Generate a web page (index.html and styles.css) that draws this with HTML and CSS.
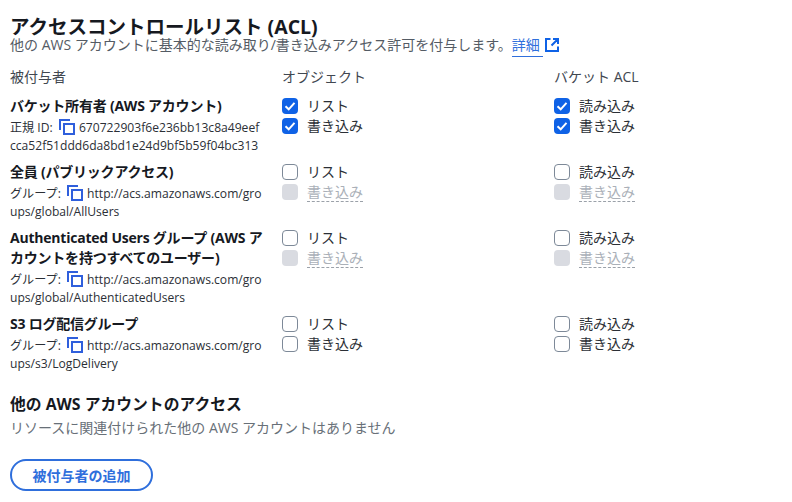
FILE: index.html
```html
<!DOCTYPE html>
<html lang="ja">
<head>
    <meta charset="UTF-8">
    <title>アクセスコントロールリスト (ACL)</title>
    <link rel="stylesheet" href="styles.css">
</head>
<body>
    <div class="container">
        <h1>アクセスコントロールリスト (ACL)</h1>
        <p class="desc">他の AWS アカウントに基本的な読み取り/書き込みアクセス許可を付与します。<a class="more" href="#">詳細</a><svg class="ext-icon" width="14" height="14" viewBox="0 0 14 14"><path d="M5.500 1H1v12h12V8.500M8 1H13V6M13 1L6.500 7.500" fill="none" stroke="#0f62e6" stroke-width="2"/></svg></p>

        <div class="acl-grid">
            <div class="col-head">被付与者</div>
            <div class="col-head">オブジェクト</div>
            <div class="col-head">バケット ACL</div>

            <div class="grantee">
                <div class="grantee-name">バケット所有者 (AWS アカウント)</div>
                <div class="grantee-id">正規 ID: <svg class="copy-icon" width="16" height="16" viewBox="0 0 16 16"><use href="#copy"/></svg> 670722903f6e236bb13c8a49eefcca52f51ddd6da8bd1e24d9bf5b59f04bc313</div>
            </div>
            <div class="checks">
                <div class="check"><span class="box checked"><svg width="16" height="16" viewBox="0 0 16 16"><use href="#tick"/></svg></span>リスト</div>
                <div class="check"><span class="box checked"><svg width="16" height="16" viewBox="0 0 16 16"><use href="#tick"/></svg></span>書き込み</div>
            </div>
            <div class="checks">
                <div class="check"><span class="box checked"><svg width="16" height="16" viewBox="0 0 16 16"><use href="#tick"/></svg></span>読み込み</div>
                <div class="check"><span class="box checked"><svg width="16" height="16" viewBox="0 0 16 16"><use href="#tick"/></svg></span>書き込み</div>
            </div>

            <div class="grantee">
                <div class="grantee-name">全員 (パブリックアクセス)</div>
                <div class="grantee-id">グループ: <svg class="copy-icon" width="16" height="16" viewBox="0 0 16 16"><use href="#copy"/></svg> http://acs.amazonaws.com/groups/global/AllUsers</div>
            </div>
            <div class="checks">
                <div class="check"><span class="box"></span>リスト</div>
                <div class="check disabled"><span class="box"></span><span class="dashed">書き込み</span></div>
            </div>
            <div class="checks">
                <div class="check"><span class="box"></span>読み込み</div>
                <div class="check disabled"><span class="box"></span><span class="dashed">書き込み</span></div>
            </div>

            <div class="grantee">
                <div class="grantee-name">Authenticated Users グループ (AWS アカウントを持つすべてのユーザー)</div>
                <div class="grantee-id">グループ: <svg class="copy-icon" width="16" height="16" viewBox="0 0 16 16"><use href="#copy"/></svg> http://acs.amazonaws.com/groups/global/AuthenticatedUsers</div>
            </div>
            <div class="checks">
                <div class="check"><span class="box"></span>リスト</div>
                <div class="check disabled"><span class="box"></span><span class="dashed">書き込み</span></div>
            </div>
            <div class="checks">
                <div class="check"><span class="box"></span>読み込み</div>
                <div class="check disabled"><span class="box"></span><span class="dashed">書き込み</span></div>
            </div>

            <div class="grantee">
                <div class="grantee-name">S3 ログ配信グループ</div>
                <div class="grantee-id">グループ: <svg class="copy-icon" width="16" height="16" viewBox="0 0 16 16"><use href="#copy"/></svg> http://acs.amazonaws.com/groups/s3/LogDelivery</div>
            </div>
            <div class="checks">
                <div class="check"><span class="box"></span>リスト</div>
                <div class="check"><span class="box"></span>書き込み</div>
            </div>
            <div class="checks">
                <div class="check"><span class="box"></span>読み込み</div>
                <div class="check"><span class="box"></span>書き込み</div>
            </div>
        </div>

        <h2>他の AWS アカウントのアクセス</h2>
        <p class="none">リソースに関連付けられた他の AWS アカウントはありません</p>
        <button class="add-button">被付与者の追加</button>
    </div>

    <svg class="defs" width="0" height="0">
        <defs>
            <g id="copy" fill="none" stroke="#2f5fdc" stroke-width="2">
                <path d="M1 11V1H11"/>
                <rect x="5" y="5" width="10" height="10"/>
            </g>
            <path id="tick" d="M3.500 8.300L6.700 11.300L12.500 4.800" fill="none" stroke="#fff" stroke-width="2"/>
        </defs>
    </svg>
</body>
</html>
```

FILE: styles.css
```css
/* General Styles */
body {
    font-family: "Open Sans", "Noto Sans CJK JP", sans-serif;
    background-color: #ffffff;
    color: #16191f;
    margin: 0;
    padding: 0;
    font-size: 14px;
    line-height: 20px;
}

.container {
    padding: 17px 10px 0 10px;
}

/* Titles */
h1 {
    margin: 0;
    font-size: 19.5px;
    line-height: 20px;
    font-weight: 700;
}

h2 {
    margin: 13px 0 0 0;
    font-size: 15.8px;
    line-height: 22px;
    font-weight: 700;
}

.desc {
    margin: 0;
    height: 16px;
    font-size: 14px;
    line-height: 16px;
    color: #545b64;
}

.more {
    color: #2f6fdc;
    text-decoration: none;
    border-bottom: 1px solid #2f6fdc;
    padding: 0 3px 2px 0;
}

.ext-icon {
    vertical-align: -2px;
    margin-left: 2px;
}

/* Grant table */
.acl-grid {
    display: grid;
    grid-template-columns: 272px 272px 228px;
    margin-top: 14px;
}

.col-head {
    color: #414750;
    padding-bottom: 9px;
}

.grantee {
    padding-right: 18px;
    padding-bottom: 7px;
}

.grantee-name {
    font-weight: 700;
    line-height: 20px;
    letter-spacing: -0.22px;
}

.grantee-id {
    font-size: 12.1px;
    line-height: 18px;
    padding-top: 3px;
    color: #2b2f36;
    word-break: break-all;
}

.copy-icon {
    vertical-align: -3px;
    margin: 0 1px 0 3px;
}

.check {
    display: flex;
    align-items: center;
    height: 20px;
    color: #2b2f36;
}

.box {
    box-sizing: border-box;
    width: 16px;
    height: 16px;
    border: 1px solid #7d8998;
    border-radius: 4px;
    margin-right: 9px;
    display: block;
}

.box svg {
    display: block;
}

.box.checked {
    border: none;
    background-color: #0f62e6;
}

.disabled {
    color: #aab0b8;
}

.disabled .box {
    border: none;
    background-color: #d9dbe1;
}

.dashed {
    border-bottom: 1px dashed #9ba1a9;
    line-height: 18px;
}

.none {
    margin: 3px 0 0 0;
    color: #687078;
}

.add-button {
    display: block;
    box-sizing: border-box;
    margin-top: 21px;
    width: 143px;
    height: 32px;
    border: 2px solid #2f6fdc;
    border-radius: 16px;
    background: #ffffff;
    color: #2f6fdc;
    font-family: inherit;
    font-size: 14px;
    font-weight: 700;
    padding: 0;
}

.defs {
    display: block;
}
```
